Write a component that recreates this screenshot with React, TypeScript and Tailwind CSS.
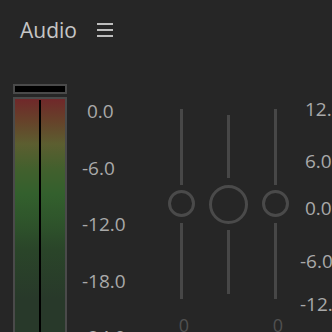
import React from 'react';

const font = { fontFamily: '"Open Sans", "Liberation Sans", sans-serif' };

const leftScale = ['0.0', '-6.0', '-12.0', '-18.0', '-24.0'];

const rightScale = [
    { label: '12.0', cls: 'mt-[15px]' },
    { label: '6.0', cls: 'mt-[32px]' },
    { label: '0.0', cls: 'mt-[27px]' },
    { label: '-6.0', cls: 'mt-[33px]' },
    { label: '-12.0', cls: 'mt-[23px]' },
];

const Fader: React.FC<{ big?: boolean; label?: string }> = ({ big, label }) => (
    <div className="w-[40px] shrink-0 flex flex-col items-center">
        {big ? (
            <>
                <div className="mt-[31px] w-[3px] h-[63px] bg-[#474747]"></div>
                <div className="mt-[7px] w-[39px] h-[39px] rounded-full border-[3px] border-[#4a4a4a]"></div>
                <div className="mt-[6px] w-[3px] h-[64px] bg-[#474747]"></div>
            </>
        ) : (
            <>
                <div className="mt-[25px] w-[3px] h-[76px] bg-[#474747]"></div>
                <div className="mt-[5px] w-[27px] h-[27px] rounded-full border-[3px] border-[#4a4a4a]"></div>
                <div className="mt-[6px] w-[3px] h-[76px] bg-[#474747]"></div>
                <span className="mt-[16px] ml-[6px] text-[18px] leading-[20px] font-medium text-[#505050]">{label}</span>
            </>
        )}
    </div>
);

export default function App() {
    return (
        <div className="w-[332px] h-[332px] overflow-hidden bg-[#262626]" style={font}>
            {/* Panel header */}
            <div className="flex items-center h-[62px] pl-[20px] pb-[2px]">
                <span className="text-[21px] leading-[26px] font-medium text-[#c6c6c6]">Audio</span>
                <div className="ml-[20px] flex flex-col gap-[4px]">
                    <div className="w-[16px] h-[2px] bg-[#bdbdbd]"></div>
                    <div className="w-[16px] h-[2px] bg-[#bdbdbd]"></div>
                    <div className="w-[16px] h-[2px] bg-[#bdbdbd]"></div>
                </div>
            </div>

            <div className="flex mt-[22px] w-[400px]">
                {/* Level meter */}
                <div className="ml-[13px] w-[54px] shrink-0 flex flex-col gap-[3px]">
                    <div className="h-[10px] border-2 border-[#4a4a4a] bg-black"></div>
                    <div className="h-[260px] border-2 border-[#4a4a4a] flex justify-center bg-[linear-gradient(to_bottom,#70282a_0px,#66422a_22px,#5c5e30_45px,#42602d_70px,#33602d_95px,#2e532b_125px,#2a4529_150px,#28392a_200px)]">
                        <div className="mt-[1px] w-[2px] bg-black"></div>
                    </div>
                </div>

                {/* dB scale for meter */}
                <div className="ml-[15px] w-[79px] shrink-0 flex flex-col -mt-[1px] text-[19px] font-medium text-[#a9a9a9]">
                    {leftScale.map((v) => (
                        <div key={v} className={`h-[56.5px] leading-[56.5px] ${v.startsWith('-') ? '' : 'pl-[5px]'}`}>
                            {v}
                        </div>
                    ))}
                </div>

                {/* Faders */}
                <div className="flex shrink-0 gap-[7px]">
                    <Fader label="0" />
                    <Fader big />
                    <Fader label="0" />
                </div>

                {/* dB scale for faders */}
                <div className="ml-[5px] shrink-0 flex flex-col text-[19px] font-medium text-[#a9a9a9] whitespace-nowrap">
                    {rightScale.map((r) => (
                        <div key={r.label} className={`h-[20px] leading-[20px] ${r.cls} ${r.label.startsWith('-') ? '' : 'pl-[5px]'}`}>
                            {r.label}
                        </div>
                    ))}
                </div>
            </div>
        </div>
    );
}
